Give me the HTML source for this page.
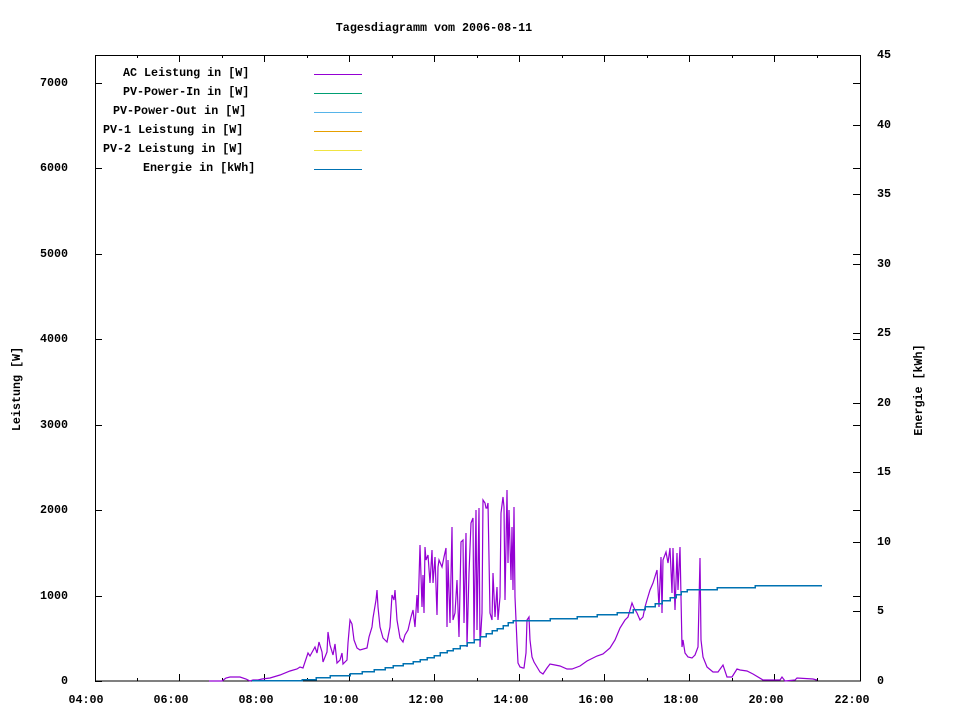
<!DOCTYPE html>
<html><head><meta charset="utf-8"><style>
html,body{margin:0;padding:0;background:#fff;width:960px;height:720px;overflow:hidden}
svg{display:block}
text{font-family:"Liberation Mono",monospace;font-weight:bold;font-size:11.7px;fill:#000}
</style></head><body>
<svg width="960" height="720" viewBox="0 0 960 720" xmlns="http://www.w3.org/2000/svg">
<rect width="960" height="720" fill="#fff"/>
<text x="434" y="31" text-anchor="middle">Tagesdiagramm vom 2006-08-11</text>
<g shape-rendering="crispEdges">
<rect x="95.5" y="55.5" width="765" height="625.5" fill="none" stroke="#000" stroke-width="1"/>
<g stroke="#000" stroke-width="1">
<path d="M95 681.5h7M95 596.5h7M95 510.5h7M95 425.5h7M95 339.5h7M95 254.5h7M95 168.5h7M95 83.5h7"/>
<path d="M860 596.5h-7M860 510.5h-7M860 425.5h-7M860 339.5h-7M860 254.5h-7M860 168.5h-7M860 83.5h-7"/>
<path d="M860 611.5h-7M860 542.5h-7M860 472.5h-7M860 403.5h-7M860 333.5h-7M860 264.5h-7M860 194.5h-7M860 125.5h-7"/>
<path d="M179.5 681v-7M264.5 681v-7M349.5 681v-7M434.5 681v-7M519.5 681v-7M604.5 681v-7M689.5 681v-7M774.5 681v-7"/>
<path d="M137.5 681v-3M222.5 681v-3M307.5 681v-3M392.5 681v-3M477.5 681v-3M562.5 681v-3M647.5 681v-3M732.5 681v-3M817.5 681v-3"/>
<path d="M179.5 55v7M264.5 55v7M349.5 55v7M434.5 55v7M519.5 55v7M604.5 55v7M689.5 55v7M774.5 55v7"/>
<path d="M137.5 55v3M222.5 55v3M307.5 55v3M392.5 55v3M477.5 55v3M562.5 55v3M647.5 55v3M732.5 55v3M817.5 55v3"/>
</g>
</g>
<g text-anchor="end">
<text x="68" y="684">0</text>
<text x="68" y="599">1000</text>
<text x="68" y="513">2000</text>
<text x="68" y="428">3000</text>
<text x="68" y="342">4000</text>
<text x="68" y="257">5000</text>
<text x="68" y="171">6000</text>
<text x="68" y="86">7000</text>
</g>
<g>
<text x="877" y="684">0</text>
<text x="877" y="614">5</text>
<text x="877" y="545">10</text>
<text x="877" y="475">15</text>
<text x="877" y="406">20</text>
<text x="877" y="336">25</text>
<text x="877" y="267">30</text>
<text x="877" y="197">35</text>
<text x="877" y="128">40</text>
<text x="877" y="58">45</text>
</g>
<g text-anchor="middle">
<text x="86" y="703">04:00</text>
<text x="171" y="703">06:00</text>
<text x="256" y="703">08:00</text>
<text x="341" y="703">10:00</text>
<text x="426" y="703">12:00</text>
<text x="511" y="703">14:00</text>
<text x="596" y="703">16:00</text>
<text x="681" y="703">18:00</text>
<text x="766" y="703">20:00</text>
<text x="852" y="703">22:00</text>
</g>
<text transform="translate(20,389) rotate(-90)" text-anchor="middle">Leistung [W]</text>
<text transform="translate(922,390) rotate(-90)" text-anchor="middle">Energie [kWh]</text>
<text x="123" y="76">AC Leistung in [W]</text>
<text x="123" y="95">PV-Power-In in [W]</text>
<text x="113" y="114">PV-Power-Out in [W]</text>
<text x="103" y="133">PV-1 Leistung in [W]</text>
<text x="103" y="152">PV-2 Leistung in [W]</text>
<text x="143" y="171">Energie in [kWh]</text>
<g stroke-width="1" shape-rendering="crispEdges">
<path d="M314 74.5h48" stroke="#9400d3"/>
<path d="M314 93.5h48" stroke="#009e73"/>
<path d="M314 112.5h48" stroke="#56b4e9"/>
<path d="M314 131.5h48" stroke="#e69f00"/>
<path d="M314 150.5h48" stroke="#f0e442"/>
<path d="M314 169.5h48" stroke="#0072b2"/>
</g>
<polyline fill="none" stroke="#9400d3" stroke-width="1.2" points="
209,681 222,681 226,678 230,677 240,677 246,679 250,681 253,680 258,680 262,679 270,678 280,675 290,671 297,669 300,667 303,668 308,653 310,656 315,647 317,653 319,642 322,652 323,662 327,652 328,632 330,645 333,655 335,644 337,663 340,660 342,653 343,664 347,660 348,643 350,620 352,624 354,640 357,648 360,650 367,648 369,637 372,627 373,618 376,600 377,590 378,607 380,627 383,638 387,642 390,627 392,595 394,600 395,590 397,620 400,638 403,642 405,635 408,630 411,617 413,610 415,627 417,595 418,613 420,545 422,607 423,575 424,613 425,547 426,560 428,555 430,583 432,550 433,583 435,557 437,615 438,567 439,560 442,567 444,557 446,548 447,627 448,560 450,623 452,527 453,620 455,613 457,580 459,637 461,542 463,540 464,623 466,533 467,647 469,573 471,523 473,518 474,640 476,510 477,630 479,508 480,647 482,613 483,500 485,503 486,508 487,508 488,503 490,613 492,620 493,573 495,617 497,587 498,620 500,597 501,513 503,497 504,507 505,600 507,490 508,563 509,510 511,580 512,527 513,590 514,507 515,597 517,643 518,663 520,667 523,668 524,668 526,653 527,620 529,617 530,640 532,657 534,662 537,667 540,672 543,674 547,668 550,664 555,665 560,666 567,669 572,669 580,666 587,661 597,656 603,654 610,648 615,640 620,628 625,620 628,617 632,603 634,608 637,613 640,620 643,617 645,607 647,600 650,590 653,583 657,570 659,607 661,557 662,613 663,560 666,552 668,563 670,548 672,593 673,548 675,610 677,553 678,590 680,547 682,647 683,640 685,653 688,657 692,658 695,655 698,647 700,558 701,640 703,657 707,667 713,672 718,672 723,665 727,677 732,677 737,669 740,670 747,671 753,674 763,680 780,680 782,677 785,681 795,680 797,678 813,679 817,680"/>
<polyline fill="none" stroke="#0072b2" stroke-width="1.5" shape-rendering="crispEdges" points="
252,680.5 302,680.5 302,679.5 316,679.5 316,677.5 330,677.5 330,675.5 350,675.5 350,673.5 362,673.5 362,671.5 374,671.5 374,669.5 385,669.5 385,667.5 393,667.5 393,665.5 403,665.5 403,663.5 413,663.5 413,661.5 420,661.5 420,659.5 427,659.5 427,657.5 434,657.5 434,655.5 440,655.5 440,652.5 447,652.5 447,650.5 453,650.5 453,648.5 460,648.5 460,645.5 467,645.5 467,642.5 474,642.5 474,639.5 480,639.5 480,636.5 486,636.5 486,633.5 492,633.5 492,630.5 497,630.5 497,628.5 503,628.5 503,625.5 508,625.5 508,622.5 513,622.5 513,620.5 550,620.5 550,618.5 577,618.5 577,616.5 597,616.5 597,614.5 617,614.5 617,612.5 633,612.5 633,609.5 645,609.5 645,606.5 655,606.5 655,603.5 662,603.5 662,600.5 670,600.5 670,597.5 676,597.5 676,594.5 681,594.5 681,591.5 687,591.5 687,589.5 717,589.5 717,587.5 755,587.5 755,585.5 822,585.5"/>
</svg>
</body></html>
